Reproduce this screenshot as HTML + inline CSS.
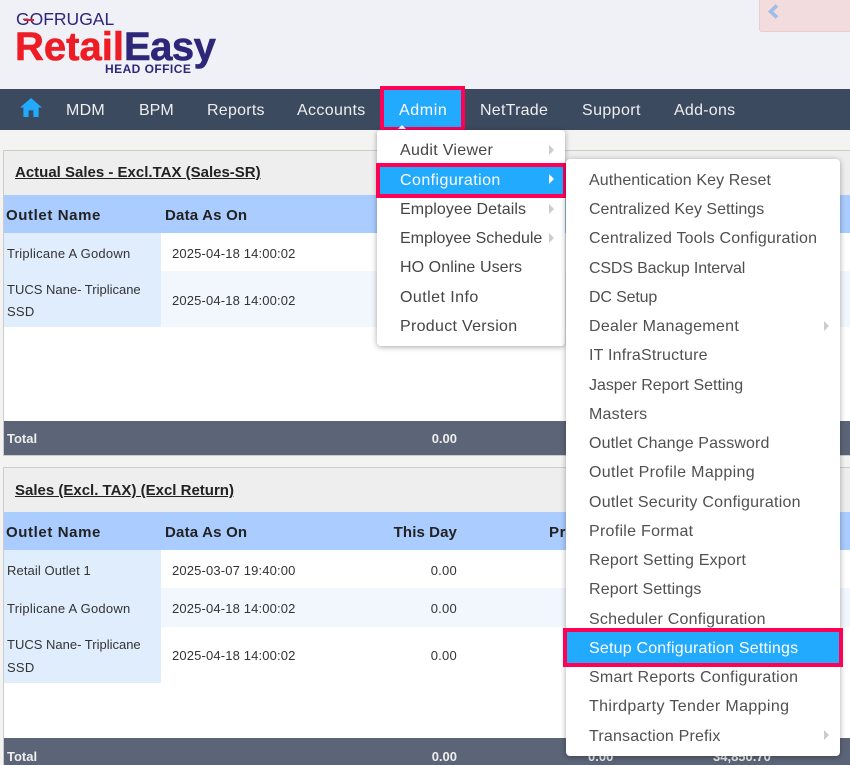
<!DOCTYPE html>
<html><head><meta charset="utf-8"><style>
html,body{margin:0;padding:0;width:850px;height:765px;overflow:hidden;background:#f3f3f1;font-family:"Liberation Sans",Arial,sans-serif}
div{position:absolute;box-sizing:border-box}
#w{left:0;top:0;width:850px;height:765px;overflow:hidden}
.t{white-space:nowrap;height:22px;line-height:22px}
.n{color:#eee;font-size:16px;letter-spacing:.25px;top:100px}
.m{font-size:16px;letter-spacing:.2px;color:#505050;left:589px;margin-top:-10px}
.a{font-size:16px;letter-spacing:.3px;color:#454545;left:400px;margin-top:-10px}
.h{font-size:15px;font-weight:bold;color:#222;letter-spacing:.6px;margin-top:-9px}
.c{font-size:13px;color:#333;letter-spacing:.25px;margin-top:-10px}
.d{font-size:13px;color:#333;letter-spacing:.15px;left:172px;margin-top:-10px}
.f{font-size:13px;font-weight:bold;color:#eee;margin-top:-10px}
.r{text-align:right}
.ar{width:0;height:0;border-left:5px solid #ccc;border-top:5px solid transparent;border-bottom:5px solid transparent;margin-top:-5px}
</style></head><body><div id="w">
<div style="left:0;top:0;width:850px;height:89px;background:#f0f1f7"></div>
<!-- logo -->
<div class="t" style="left:16px;top:8px;font-size:17.5px;color:#2d2679;letter-spacing:0">GOFRUGAL</div>
<div style="left:24px;top:19px;width:10px;height:2px;background:#ee1c25"></div>
<div class="t" style="left:15px;top:30px;height:34px;line-height:34px;font-size:40px;font-weight:bold;letter-spacing:0;color:#ee1c25;-webkit-text-stroke:.6px #ee1c25">Retail</div>
<div class="t" style="left:124px;top:30px;height:34px;line-height:34px;font-size:40px;font-weight:bold;letter-spacing:-.5px;color:#2d2679;-webkit-text-stroke:.6px #2d2679">Easy</div>
<div class="t" style="left:105px;top:58px;font-size:12px;font-weight:bold;letter-spacing:.45px;color:#2d2679">HEAD OFFICE</div>
<!-- side tab -->
<div style="left:759px;top:-2px;width:95px;height:34px;background:#f3dcdd;border:1px solid #eccccf;border-radius:3px"></div>
<svg style="position:absolute;left:767px;top:3px" width="14" height="17" viewBox="0 0 14 17"><path d="M10 2.5 L3.5 8.5 L10 14.5" fill="none" stroke="#9fbde6" stroke-width="3.6"/></svg>
<!-- nav -->
<div style="left:0;top:89px;width:850px;height:41px;background:#3c4a60"></div>
<svg style="position:absolute;left:19px;top:97px" width="24" height="20" viewBox="0 0 24 21"><path d="M0.5 11 L12 1 L23.5 11 H20 V21 H14.5 V14 H9.5 V21 H4 V11 Z" fill="#22aaff"/></svg>
<div class="t n" style="left:66px">MDM</div>
<div class="t n" style="left:139px;letter-spacing:0">BPM</div>
<div class="t n" style="left:207px">Reports</div>
<div class="t n" style="left:297px;letter-spacing:.35px">Accounts</div>
<div style="left:380px;top:86px;width:85px;height:45px;background:#22aaff;border:4px solid #ff0055"></div>
<div class="t n" style="left:399px;color:#fff;letter-spacing:.6px">Admin</div>
<div class="t n" style="left:480px">NetTrade</div>
<div class="t n" style="left:582px;letter-spacing:.4px">Support</div>
<div class="t n" style="left:674px">Add-ons</div>
<div style="left:398px;top:125px;width:0;height:0;border-left:4px solid transparent;border-right:4px solid transparent;border-bottom:4px solid #fff"></div>
<!-- panel 1 -->
<div style="left:3px;top:150px;width:850px;height:306px;background:#fff;border:1px solid #ccc"></div>
<div style="left:4px;top:151px;width:846px;height:44px;background:#eee"></div>
<div class="t" style="left:15px;top:162px;font-size:15px;font-weight:bold;color:#222;text-decoration:underline;letter-spacing:0">Actual Sales - Excl.TAX (Sales-SR)</div>
<div style="left:4px;top:195px;width:846px;height:38px;background:#aaccff"></div>
<div class="t h" style="left:6px;top:214px">Outlet Name</div>
<div class="t h" style="left:165px;top:214px;letter-spacing:.2px">Data As On</div>
<div style="left:4px;top:233px;width:157px;height:94px;background:#e0edfd"></div>
<div style="left:161px;top:271px;width:689px;height:56px;background:#f2f7fe"></div>
<div class="t c" style="left:7px;top:253px">Triplicane A Godown</div>
<div class="t d" style="top:253px">2025-04-18 14:00:02</div>
<div class="t c" style="left:7px;top:289px;letter-spacing:0">TUCS Nane- Triplicane</div>
<div class="t c" style="left:7px;top:311px">SSD</div>
<div class="t d" style="top:300px">2025-04-18 14:00:02</div>
<div style="left:4px;top:421px;width:846px;height:34px;background:#5b6577"></div>
<div class="t f" style="left:7px;top:438px">Total</div>
<div class="t f r" style="left:397px;width:60px;top:438px">0.00</div>
<!-- panel 2 -->
<div style="left:3px;top:467px;width:850px;height:310px;background:#fff;border:1px solid #ccc"></div>
<div style="left:4px;top:468px;width:846px;height:44px;background:#eee"></div>
<div class="t" style="left:15px;top:480px;font-size:15px;font-weight:bold;color:#222;text-decoration:underline;letter-spacing:0">Sales (Excl. TAX) (Excl Return)</div>
<div style="left:4px;top:512px;width:846px;height:38px;background:#aaccff"></div>
<div class="t h" style="left:6px;top:531px">Outlet Name</div>
<div class="t h" style="left:165px;top:531px;letter-spacing:.2px">Data As On</div>
<div class="t h r" style="left:357px;width:100px;top:531px;letter-spacing:.1px">This Day</div>
<div class="t h" style="left:549px;top:531px">Prev</div>
<div style="left:4px;top:550px;width:157px;height:133px;background:#e0edfd"></div>
<div style="left:161px;top:588px;width:689px;height:39px;background:#f2f7fe"></div>
<div class="t c" style="left:7px;top:570px;letter-spacing:.1px">Retail Outlet 1</div>
<div class="t d" style="top:570px">2025-03-07 19:40:00</div>
<div class="t c r" style="left:397px;width:60px;top:570px">0.00</div>
<div class="t c" style="left:7px;top:608px">Triplicane A Godown</div>
<div class="t d" style="top:608px">2025-04-18 14:00:02</div>
<div class="t c r" style="left:397px;width:60px;top:608px">0.00</div>
<div class="t c" style="left:7px;top:644px;letter-spacing:0">TUCS Nane- Triplicane</div>
<div class="t c" style="left:7px;top:667px">SSD</div>
<div class="t d" style="top:655px">2025-04-18 14:00:02</div>
<div class="t c r" style="left:397px;width:60px;top:655px">0.00</div>
<div style="left:4px;top:738px;width:846px;height:27px;background:#5b6577"></div>
<div class="t f" style="left:7px;top:756px">Total</div>
<div class="t f r" style="left:397px;width:60px;top:756px">0.00</div>
<div class="t f" style="left:588px;top:756px">0.00</div>
<div class="t f" style="left:713px;top:756px">34,850.70</div>
<!-- menu 1 -->
<div style="left:377px;top:130px;width:188px;height:216px;background:#fff;border-radius:4px;box-shadow:0 1px 6px rgba(0,0,0,.35)"></div>
<div class="t a" style="top:150px">Audit Viewer</div><div class="ar" style="left:549px;top:150px"></div>
<div style="left:376px;top:163px;width:191px;height:35px;background:#22aaff;border:4px solid #ff0055"></div>
<div class="t a" style="top:180px;color:#fff;letter-spacing:.43px">Configuration</div><div class="ar" style="left:549px;top:179px;border-left-color:#fff"></div>
<div class="t a" style="top:209px;letter-spacing:.1px">Employee Details</div><div class="ar" style="left:549px;top:209px"></div>
<div class="t a" style="top:238px;letter-spacing:0">Employee Schedule</div><div class="ar" style="left:549px;top:238px"></div>
<div class="t a" style="top:267px;letter-spacing:.08px">HO Online Users</div>
<div class="t a" style="top:297px;letter-spacing:.45px">Outlet Info</div>
<div class="t a" style="top:326px">Product Version</div>
<!-- menu 2 -->
<div style="left:566px;top:159px;width:274px;height:597px;background:#fff;border-radius:4px;box-shadow:0 1px 6px rgba(0,0,0,.35)"></div>
<div class="t m" style="top:180px;letter-spacing:.1px">Authentication Key Reset</div>
<div class="t m" style="top:209px;letter-spacing:0">Centralized Key Settings</div>
<div class="t m" style="top:238px">Centralized Tools Configuration</div>
<div class="t m" style="top:268px;letter-spacing:-.15px">CSDS Backup Interval</div>
<div class="t m" style="top:297px;letter-spacing:-.15px">DC Setup</div>
<div class="t m" style="top:326px;letter-spacing:.3px">Dealer Management</div><div class="ar" style="left:824px;top:326px"></div>
<div class="t m" style="top:355px">IT InfraStructure</div>
<div class="t m" style="top:385px;letter-spacing:-.03px">Jasper Report Setting</div>
<div class="t m" style="top:414px">Masters</div>
<div class="t m" style="top:443px;letter-spacing:.12px">Outlet Change Password</div>
<div class="t m" style="top:472px;letter-spacing:.35px">Outlet Profile Mapping</div>
<div class="t m" style="top:502px;letter-spacing:.25px">Outlet Security Configuration</div>
<div class="t m" style="top:531px;letter-spacing:.28px">Profile Format</div>
<div class="t m" style="top:560px">Report Setting Export</div>
<div class="t m" style="top:589px;letter-spacing:.15px">Report Settings</div>
<div class="t m" style="top:619px;letter-spacing:.22px">Scheduler Configuration</div>
<div style="left:563px;top:628px;width:280px;height:39px;background:#22aaff;border:4px solid #ff0055"></div>
<div class="t m" style="top:648px;color:#fff">Setup Configuration Settings</div>
<div class="t m" style="top:677px;letter-spacing:.24px">Smart Reports Configuration</div>
<div class="t m" style="top:706px;letter-spacing:.38px">Thirdparty Tender Mapping</div>
<div class="t m" style="top:736px;letter-spacing:.18px">Transaction Prefix</div><div class="ar" style="left:824px;top:735px"></div>
</div></body></html>
